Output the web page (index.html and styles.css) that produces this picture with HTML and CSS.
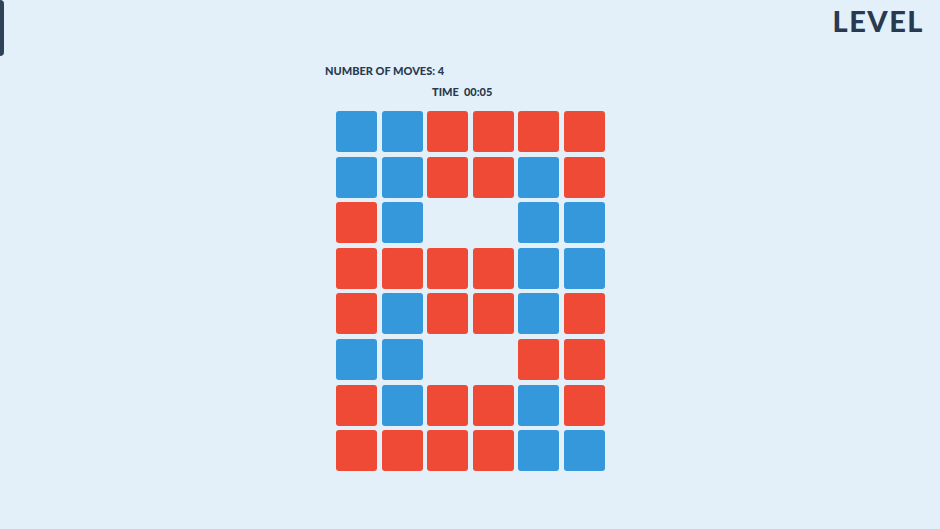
FILE: index.html
```html
<!DOCTYPE html>
<html>
<head>
<meta charset="utf-8">
<link rel="stylesheet" href="styles.css">
</head>
<body>
<div class="page">
  <header class="topbar">
    <div class="edge-btn"></div>
    <div class="level">LEVEL</div>
  </header>
  <main class="board">
    <div class="moves">NUMBER OF MOVES: 4</div>
    <div class="time">TIME&nbsp;&nbsp;00:05</div>
    <div class="grid">
      <div class="t b"></div><div class="t b"></div><div class="t r"></div><div class="t r"></div><div class="t r"></div><div class="t r"></div>
      <div class="t b"></div><div class="t b"></div><div class="t r"></div><div class="t r"></div><div class="t b"></div><div class="t r"></div>
      <div class="t r"></div><div class="t b"></div><div class="t e"></div><div class="t e"></div><div class="t b"></div><div class="t b"></div>
      <div class="t r"></div><div class="t r"></div><div class="t r"></div><div class="t r"></div><div class="t b"></div><div class="t b"></div>
      <div class="t r"></div><div class="t b"></div><div class="t r"></div><div class="t r"></div><div class="t b"></div><div class="t r"></div>
      <div class="t b"></div><div class="t b"></div><div class="t e"></div><div class="t e"></div><div class="t r"></div><div class="t r"></div>
      <div class="t r"></div><div class="t b"></div><div class="t r"></div><div class="t r"></div><div class="t b"></div><div class="t r"></div>
      <div class="t r"></div><div class="t r"></div><div class="t r"></div><div class="t r"></div><div class="t b"></div><div class="t b"></div>
    </div>
  </main>
</div>
</body>
</html>
```
FILE: styles.css
```css
html, body {
  margin: 0;
  padding: 0;
}
body {
  background: #e3f0fa;
  font-family: "Lato", "Noto Sans", sans-serif;
  color: #283a4f;
  overflow: hidden;
}
.page {
  width: 940px;
  height: 529px;
}
.topbar {
  display: flex;
  justify-content: space-between;
  align-items: flex-start;
  height: 60px;
}
.edge-btn {
  width: 40px;
  height: 56px;
  margin-left: -36px;
  background: #2f4257;
  border-radius: 4px;
}
.level {
  font-size: 29px;
  font-weight: 900;
  letter-spacing: 1.5px;
  line-height: 29px;
  margin-top: 6px;
  margin-right: 16px;
}
.board {
  margin-left: 325px;
  display: flex;
  flex-direction: column;
  align-items: flex-start;
}
.moves {
  font-size: 11px;
  font-weight: 900;
  letter-spacing: 0;
  line-height: 14px;
  margin-top: 4px;
}
.time {
  font-size: 11px;
  font-weight: 900;
  letter-spacing: 0;
  line-height: 14px;
  margin-top: 7px;
  margin-left: 107px;
}
.grid {
  margin-top: 12px;
  margin-left: 11px;
  display: grid;
  grid-template-columns: repeat(6, 41px);
  grid-auto-rows: 41px;
  gap: 4.6px;
}
.t {
  border-radius: 3px;
}
.b {
  background: #3498db;
}
.r {
  background: #ef4a36;
}
.e {
  background: transparent;
}
```
